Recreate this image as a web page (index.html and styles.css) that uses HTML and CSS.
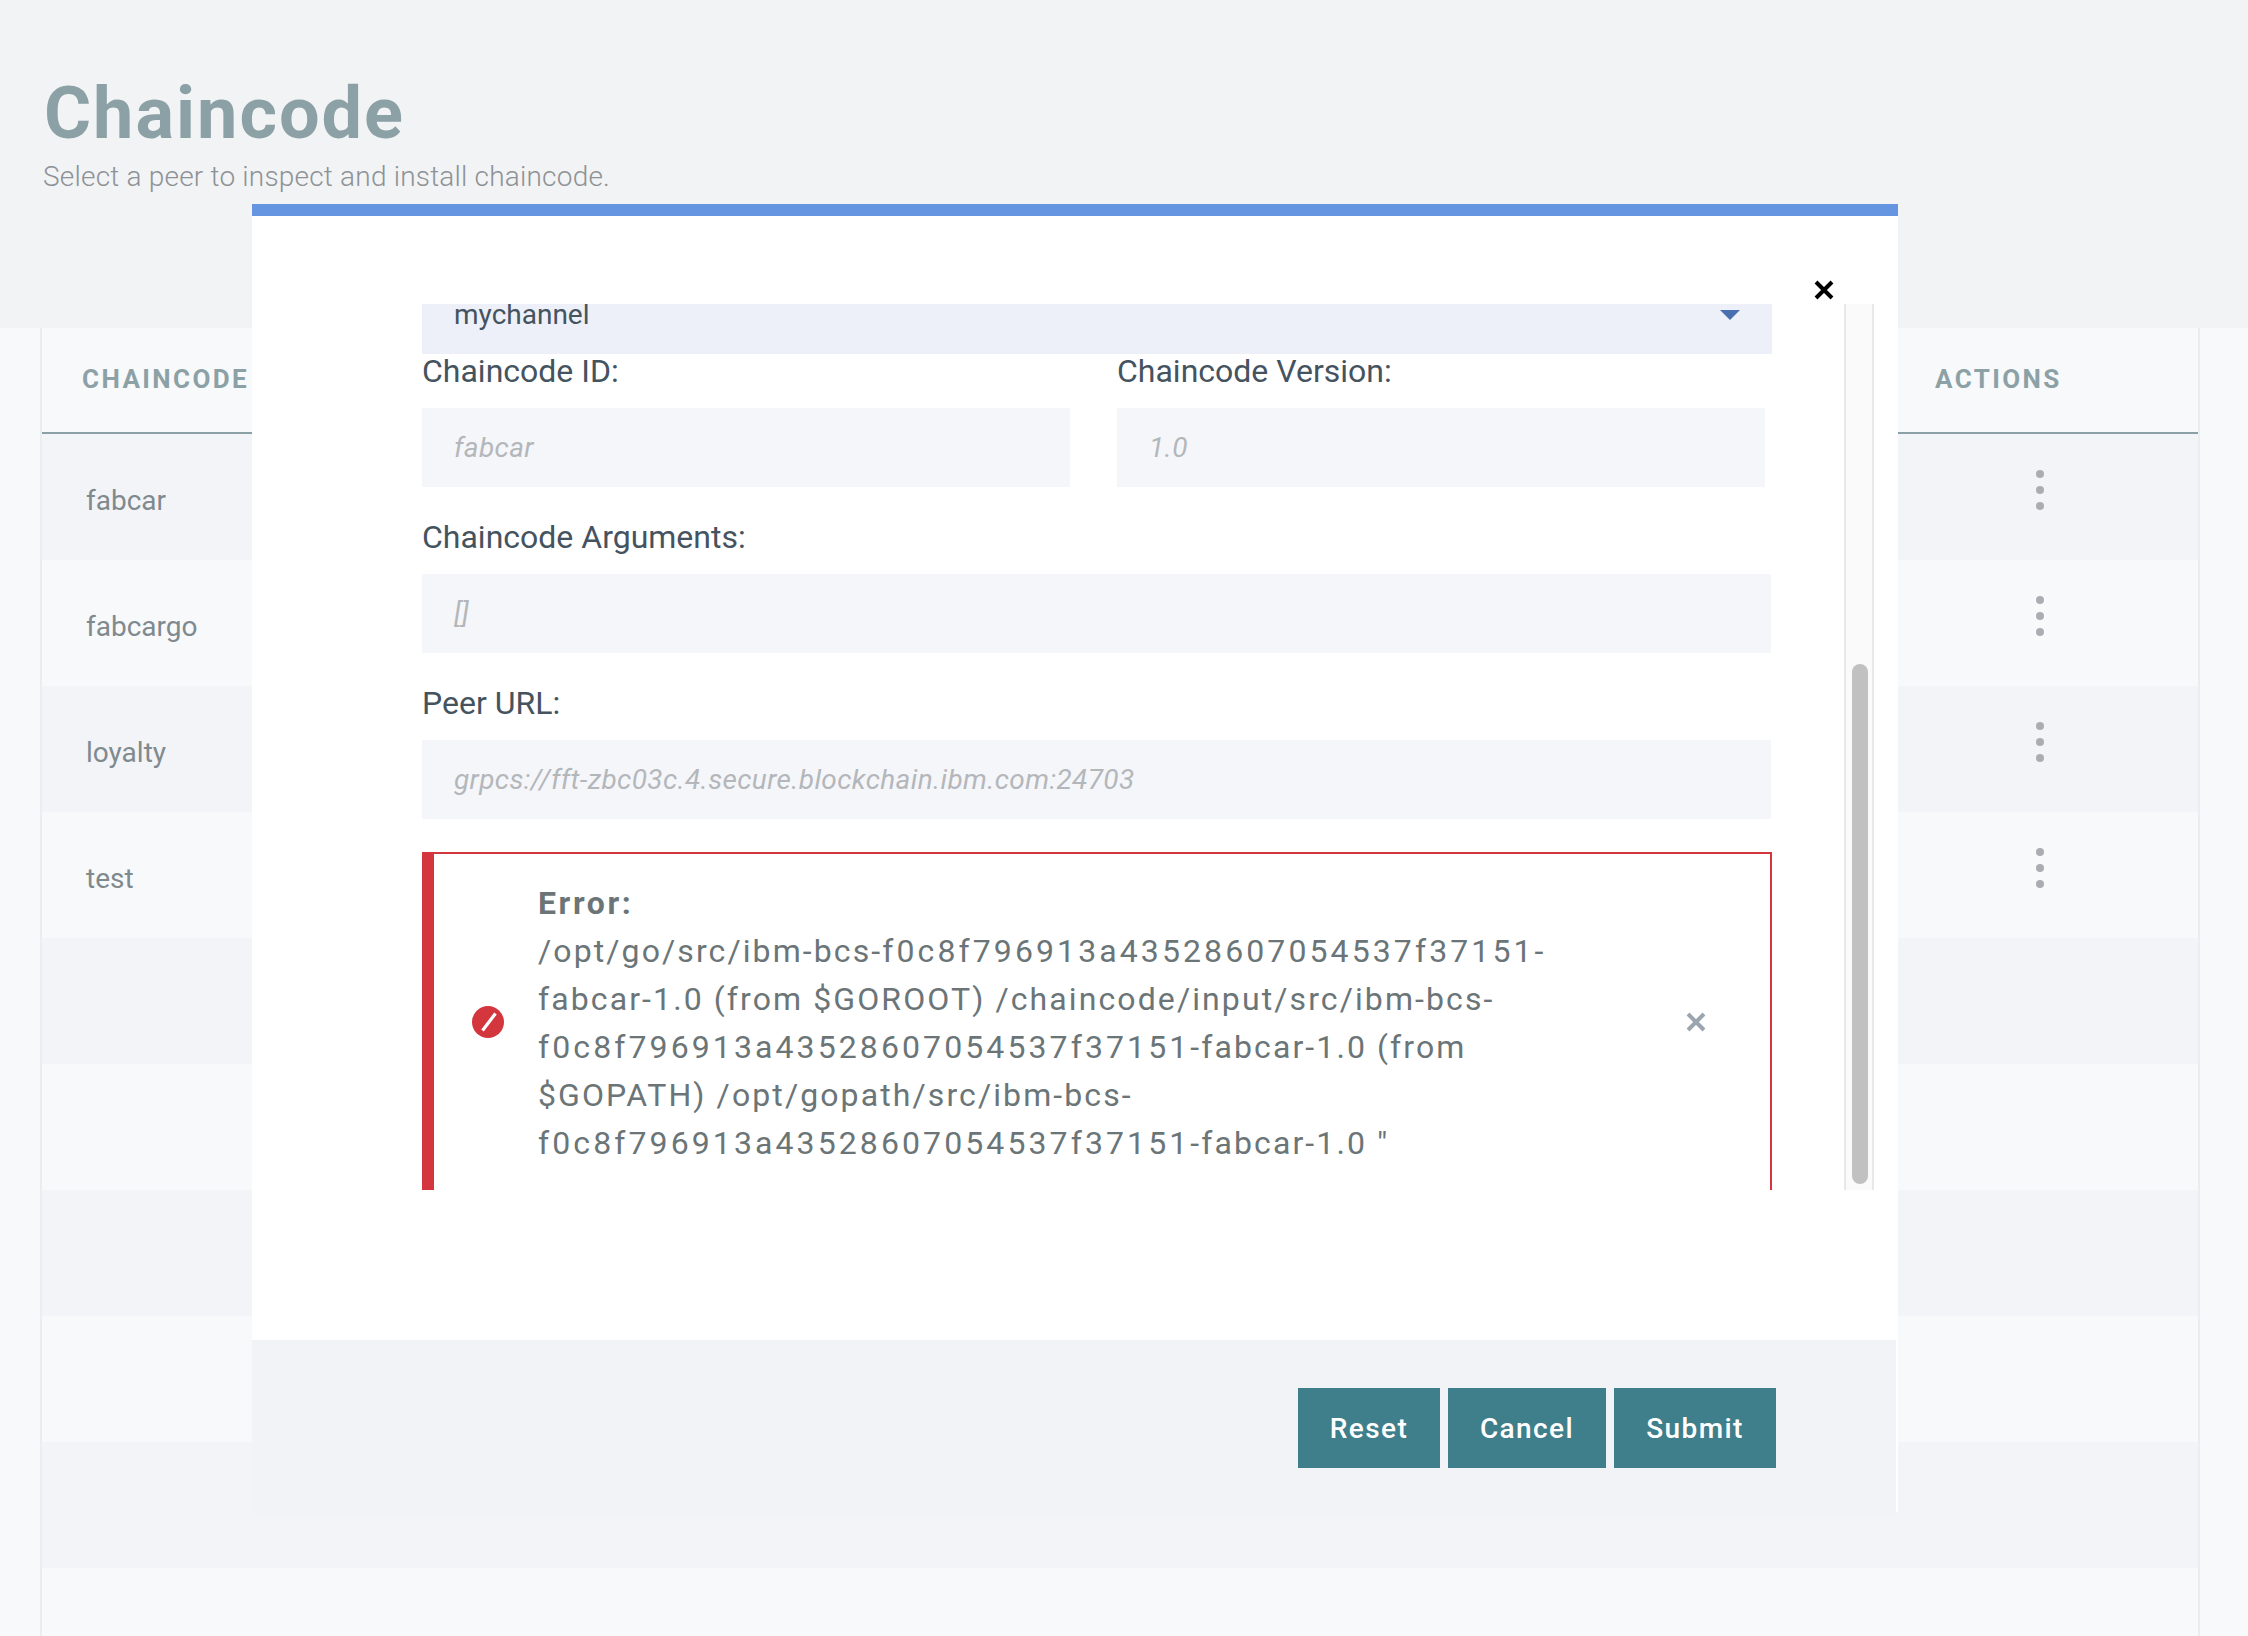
FILE: index.html
```html
<!DOCTYPE html>
<html>
<head>
    <title>Chaincode</title>
    <link rel="stylesheet" href="styles.css">
</head>
<body>

    <!-- Page header -->
    <div class="page-header">
        <h1 class="page-title">Chaincode</h1>
        <p class="page-subtitle">Select a peer to inspect and install chaincode.</p>
    </div>

    <!-- Chaincode table -->
    <div class="table">
        <div class="table-head">
            <div class="head-cell">CHAINCODE</div>
            <div class="head-cell head-actions">ACTIONS</div>
        </div>
        <div class="table-row"><div class="cell">fabcar</div><div class="kebab"><i></i><i></i><i></i></div></div>
        <div class="table-row"><div class="cell">fabcargo</div><div class="kebab"><i></i><i></i><i></i></div></div>
        <div class="table-row"><div class="cell">loyalty</div><div class="kebab"><i></i><i></i><i></i></div></div>
        <div class="table-row"><div class="cell">test</div><div class="kebab"><i></i><i></i><i></i></div></div>
        <div class="table-row"></div>
        <div class="table-row"></div>
        <div class="table-row"></div>
        <div class="table-row"></div>
        <div class="table-row"></div>
        <div class="table-row"></div>
    </div>

    <!-- Install modal -->
    <div class="modal">
        <button class="modal-close" aria-label="Close">
            <svg width="20" height="20" viewBox="0 0 20 20"><path d="M2 2 18 18M18 2 2 18" stroke="#000" stroke-width="4" fill="none"/></svg>
        </button>
        <div class="modal-body">
            <div class="scroll-view">
                <div class="scroll-inner">
                    <div class="select">
                        <span>mychannel</span>
                        <svg class="caret" width="20" height="10" viewBox="0 0 20 10"><path d="M0 0H20L10 10Z" fill="#4a6fae"/></svg>
                    </div>
                    <div class="field-row">
                        <div class="field">
                            <label class="field-label">Chaincode ID:</label>
                            <div class="input">fabcar</div>
                        </div>
                        <div class="field">
                            <label class="field-label">Chaincode Version:</label>
                            <div class="input">1.0</div>
                        </div>
                    </div>
                    <div class="field field-block">
                        <label class="field-label">Chaincode Arguments:</label>
                        <div class="input input-wide">[]</div>
                    </div>
                    <div class="field field-block">
                        <label class="field-label">Peer URL:</label>
                        <div class="input input-wide">grpcs://fft-zbc03c.4.secure.blockchain.ibm.com:24703</div>
                    </div>
                    <div class="error-box">
                        <svg class="error-icon" width="32" height="32" viewBox="0 0 32 32"><circle cx="16" cy="16" r="16" fill="#d4363d"/><path d="M10.5 24.5 23.5 7.5" stroke="#fff" stroke-width="3.2" fill="none"/></svg>
                        <div class="error-text">
                            <strong>Error:</strong><br>
                            /opt/go/src/ibm-bcs-<span class="hash">f0c8f796913a43528607054537f37151</span>-<br>
                            fabcar-1.0 (from $GOROOT) /chaincode/input/src/ibm-bcs-<br>
                            <span class="hash">f0c8f796913a43528607054537f37151</span>-fabcar-1.0 (from<br>
                            $GOPATH) /opt/gopath/src/ibm-bcs-<br>
                            <span class="hash">f0c8f796913a43528607054537f37151</span>-fabcar-1.0 "
                        </div>
                        <svg class="error-close" width="20" height="20" viewBox="0 0 20 20"><path d="M2 2 18 18M18 2 2 18" stroke="#9aa5af" stroke-width="4" fill="none"/></svg>
                    </div>
                </div>
            </div>
            <div class="scrollbar"><div class="scrollbar-thumb"></div></div>
        </div>
        <div class="modal-footer">
            <button class="btn btn-reset">Reset</button>
            <button class="btn btn-cancel">Cancel</button>
            <button class="btn btn-submit">Submit</button>
        </div>
    </div>

</body>
</html>
```

FILE: styles.css
```css
html, body { margin: 0; height: 1636px; overflow: hidden; }
body { position: relative; background: #f8f9fb; font-family: "Roboto", sans-serif; }

.page-header { height: 328px; box-sizing: border-box; padding: 74px 0 0 43px; background: #f2f3f5; }
.page-title { margin: 0 0 5px 1px; font-size: 72px; line-height: 80px; font-weight: 700; letter-spacing: 2px; color: #8ca1a6; }
.page-subtitle { margin: 0; font-size: 28px; line-height: 36px; font-weight: 300; letter-spacing: 0.2px; color: #8d9296; }

.table { margin: 0 48px 0 40px; border-left: 2px solid #ebedef; border-right: 2px solid #ebedef; }
.table-head {
    display: flex;
    justify-content: space-between;
    height: 104px;
    border-bottom: 2px solid #8ca1a6;
}
.head-cell {
    padding: 36px 0 0 40px;
    font-size: 26px;
    line-height: 30px;
    font-weight: 700;
    letter-spacing: 2.4px;
    color: #8ca1a6;
}
.head-actions { width: 263px; padding-left: 35px; }
.table-row { display: flex; justify-content: space-between; height: 126px; background: #f8f9fb; }
.table-row:nth-child(even) { background: #f3f4f7; }
.cell { padding: 49px 0 0 44px; font-size: 28px; line-height: 36px; color: #7f8a8f; }
.kebab { display: flex; flex-direction: column; gap: 8px; width: 22px; padding-top: 36px; margin-right: 140px; }
.kebab i { display: block; width: 8px; height: 8px; border-radius: 50%; background: #a9adb1; }

.modal {
    position: absolute;
    left: 252px;
    top: 204px;
    width: 1646px;
    height: 1308px;
    box-sizing: border-box;
    border-top: 12px solid #6595e0;
    background: #fff;
}
.modal-close {
    position: absolute;
    left: 1562px;
    top: 64px;
    width: 20px;
    height: 20px;
    padding: 0;
    border: 0;
    background: none;
    line-height: 0;
}
.modal-body { display: flex; height: 1124px; box-sizing: border-box; padding: 88px 0 0 170px; }
.scroll-view { width: 1350px; height: 886px; overflow: hidden; }
.scroll-inner { margin-top: -29px; }
.scrollbar {
    width: 26px;
    height: 886px;
    margin-left: 72px;
    box-sizing: content-box;
    border-left: 2px solid #e8e8e8;
    border-right: 2px solid #e8e8e8;
    background: #fafafa;
}
.scrollbar-thumb {
    width: 16px;
    height: 520px;
    margin: 360px 0 0 6px;
    border-radius: 8px;
    background: #c1c1c1;
}

.select {
    display: flex;
    align-items: center;
    justify-content: space-between;
    height: 79px;
    padding: 0 32px;
    box-sizing: border-box;
    background: #edf0f8;
    font-size: 28px;
    color: #45535f;
}
.field-row { display: flex; gap: 47px; }
.field-row .field { width: 648px; }
.field-block { margin-top: 33px; }
.field-label { display: block; height: 54px; font-size: 32px; line-height: 34px; color: #45535f; }
.input {
    height: 79px;
    padding: 0 32px;
    box-sizing: border-box;
    background: #f4f6fa;
    font-size: 28px;
    line-height: 79px;
    font-style: italic;
    letter-spacing: 0.36px;
    color: #b4b7ba;
}
.input-wide { width: 1349px; }

.error-box {
    display: flex;
    align-items: center;
    height: 340px;
    margin-top: 33px;
    padding: 0 0 0 38px;
    box-sizing: border-box;
    border: 2px solid #d4363d;
    border-left-width: 12px;
}
.error-text {
    flex: none;
    width: 1148px;
    margin-left: 34px;
    padding-top: 2px;
    font-size: 32px;
    line-height: 48px;
    letter-spacing: 2.1px;
    color: #6b7577;
    white-space: nowrap;
}
.error-text strong { letter-spacing: 2.6px; }
.hash { letter-spacing: 3.1px; }
.error-icon { flex: none; }
.error-close { flex: none; }

.modal-footer {
    display: flex;
    justify-content: flex-start;
    gap: 8px;
    width: 1644px;
    height: 176px;
    padding: 48px 0 0 1046px;
    box-sizing: border-box;
    background: #f2f3f7;
}
.btn {
    height: 80px;
    padding: 0;
    border: 0;
    background: #3f7f8b;
    color: #fff;
    font-family: inherit;
    font-size: 28px;
    font-weight: 500;
    letter-spacing: 1.4px;
}
.btn-reset { width: 142px; }
.btn-cancel { width: 158px; }
.btn-submit { width: 162px; }
```
